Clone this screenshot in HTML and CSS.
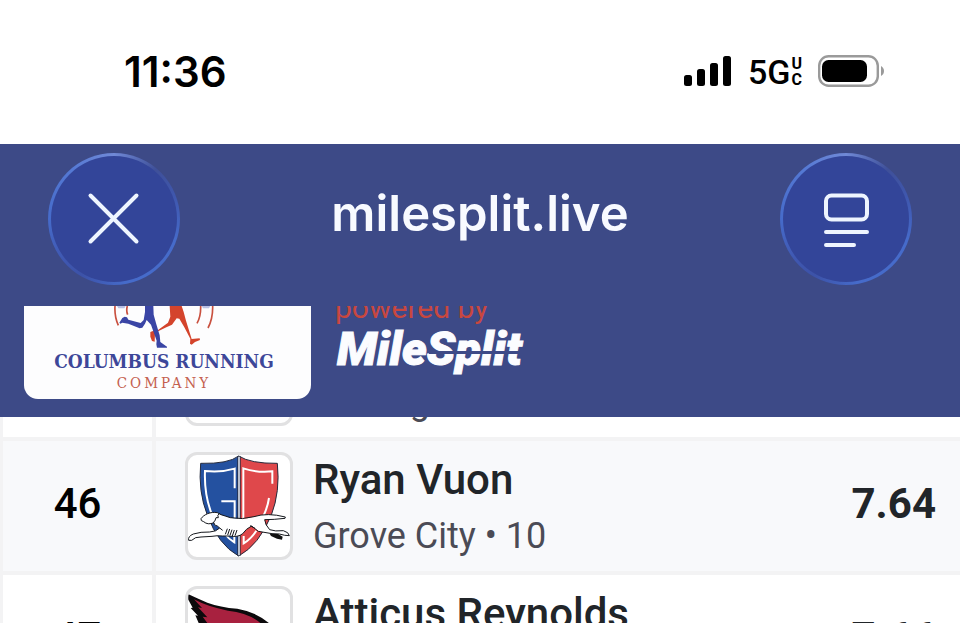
FILE: index.html
```html
<!DOCTYPE html>
<html lang="en">
<head>
<meta charset="utf-8">
<meta name="viewport" content="width=device-width, initial-scale=1">
<title>milesplit.live</title>
<link rel="stylesheet" href="styles.css">
</head>
<body>
<div class="status">
  <time class="clock">11:36</time>
  <div class="indicators">
    <svg class="signal" viewBox="0 0 48 30" aria-hidden="true">
      <rect x="0" y="19" width="8" height="11" rx="2.5"/>
      <rect x="13" y="13" width="8" height="17" rx="2.5"/>
      <rect x="26" y="7" width="8" height="23" rx="2.5"/>
      <rect x="39" y="0" width="8" height="30" rx="2.5"/>
    </svg>
    <div class="network"><span>5G</span><span class="network-sub"><span>U</span><span>C</span></span></div>
    <svg class="battery" viewBox="0 0 66 32" aria-hidden="true">
      <rect x="1.2" y="1.2" width="58.6" height="29.6" rx="9.5" fill="#fff" stroke="#9a9a9a" stroke-width="2.4"/>
      <rect x="4" y="5" width="45" height="22" rx="6.5"/>
      <path d="M63 11c4 2 4 8 0 10z" fill="#9a9a9a"/>
    </svg>
  </div>
</div>

<header class="header">
  <nav class="nav">
    <button class="round" type="button" aria-label="Close">
      <svg viewBox="0 0 132 132"><path d="M42.500 42.500l46 46M88.500 42.500l-46 46"/></svg>
    </button>
    <h1 class="title">milesplit.live</h1>
    <button class="round" type="button" aria-label="Page menu">
      <svg viewBox="0 0 132 132"><rect x="46" y="42.500" width="41" height="24" rx="5.500"/><path d="M46 79h41M46 92h28"/></svg>
    </button>
  </nav>
  <div class="sponsors">
    <div class="sponsor-card">
      <svg class="runners" viewBox="339 48 312 126" aria-hidden="true">
        <g fill="none" stroke="#c9503f" stroke-width="5">
          <path d="M348 48q-2 32 10 58M385 48q-4 14 1 26M605 48q1 32-11 52M641 48q1 38-14 66"/>
        </g>
        <path fill="#b9c0e4" d="M354 48h26l-4 7h-18zM608 48h26l-4 7h-18z"/>
        <path fill="#d4442c" d="M512 48H548L554 66L561 92L578 147L602 145L603 150L588 156L578 164L573 161L574 146L556 112L541 86L533 85L519 104L502 112L468 128L467 155L459 153L454 140V126L464 122L472 124L507 98L514 80z"/>
        <path fill="#3a45a5" d="M438 48H463L464 74L472 103L482 136L484 156L504 170V173H474L472 163L473 152L456 104L443 90L438 101L430 113L422 115L388 101L370 98L364 101L361 98L370 84L377 80L384 82L388 89L425 99L434 90L438 66z"/>
      </svg>
      <span class="sponsor-name">COLUMBUS RUNNING</span>
      <span class="sponsor-sub">COMPANY</span>
    </div>
    <div class="powered">
      <span class="powered-by">powered by</span>
      <a class="brand" href="#">MileSplit</a>
    </div>
  </div>
</header>

<main class="results">
  <table class="table">
    <tbody>
      <tr>
        <td class="rank"></td>
        <td class="athlete"><div class="entry"><span class="crest"></span><div><p class="name">&nbsp;</p><p class="school">Wellington</p></div></div></td>
        <td class="mark"></td>
      </tr>
      <tr class="alt">
        <td class="rank">46</td>
        <td class="athlete"><div class="entry">
          <span class="crest"><svg viewBox="54 45 306 306" aria-hidden="true">
            <path d="M206 48Q175 72 92 70Q84 155 112 225Q145 315 206 348z" fill="#2451a0" stroke="#252b3d" stroke-width="3"/>
            <path d="M206 48Q242 71 322 70Q331 155 304 225Q267 315 206 348z" fill="#df484b" stroke="#252b3d" stroke-width="3"/>
            <path d="M207 49v298" stroke="#252b3d" stroke-width="10"/>
            <path d="M207 50v296" stroke="#d5dce9" stroke-width="5"/>
            <g fill="none" stroke="#fff" stroke-width="6">
              <path d="M194 145V86Q154 98 105 93Q102 164 126 224M154 184h40v51M162 279q15 19 31 28v-19"/>
              <path d="M220 238V85q43 14 87 9v37M297 174q-4 27-16 52M259 272q-16 25-38 38v-22"/>
            </g>
            <path d="M93 236C101 224 122 214 142 218L153 224Q166 228 181 233Q218 240 252 230Q292 217 346 231L345 235Q311 239 284 239Q285 254 299 269Q315 275 340 272Q357 277 358 287Q344 287 328 282L306 281L265 274L245 258Q228 266 218 281Q204 293 177 288L157 288Q141 286 126 289L93 291Q75 290 65 301L56 301Q53 289 70 282Q92 275 119 276Q139 275 149 264L142 258Q130 256 132 248Q113 256 101 245Q91 243 93 236z" fill="#fff" stroke="#15181d" stroke-width="3" stroke-linejoin="round"/>
            <path d="M149 220q-9 5-4 13h-7q-2 12-9 15M240 257l15 8M149 264l9 7M172 266l-6 17M179 267l-6 18M186 269l-6 17M193 270l-6 18M201 270l-6 17" fill="none" stroke="#15181d" stroke-width="3"/>
            <path d="M299 281l25 1 14 8-2 9-15-3-18-8z" fill="#111"/>
          </svg></span>
          <div><p class="name">Ryan Vuon</p><p class="school">Grove City • 10</p></div>
        </div></td>
        <td class="mark">7.64</td>
      </tr>
      <tr>
        <td class="rank">47</td>
        <td class="athlete"><div class="entry">
          <span class="crest"><svg viewBox="54 447 306 306" aria-hidden="true">
            <path d="M54 462Q88 478 112 488Q150 502 202 506Q260 516 300 552L340 600H130L86 549L76 526L84 527L62 504L68 503L55 479z" fill="#0c0a0c"/>
            <path d="M72 478Q112 500 174 512Q240 520 272 550L300 600H150L112 549L98 530L112 532L84 502L96 504z" fill="#a8213f"/>
          </svg></span>
          <div><p class="name">Atticus Reynolds</p><p class="school">&nbsp;</p></div>
        </div></td>
        <td class="mark">7.66</td>
      </tr>
    </tbody>
  </table>
</main>
</body>
</html>
```
FILE: styles.css
```css
* {
  box-sizing: border-box;
}

body {
  margin: 0;
  height: 100vh;
  display: flex;
  flex-direction: column;
  overflow: hidden;
  background: #fff;
  color: #212529;
  font-family: Roboto, "Liberation Sans", sans-serif;
}

p,
h1 {
  margin: 0;
}

svg {
  display: block;
}

.status {
  flex: none;
  height: 144px;
  padding: 0 76px 2px 124px;
  display: flex;
  align-items: center;
  justify-content: space-between;
  color: #000;
}

.clock {
  padding-top: 2px;
  font: 600 42px/48px Inter, sans-serif;
}

.indicators {
  display: flex;
  align-items: center;
  gap: 16px;
}

.signal {
  width: 48px;
  height: 30px;
}

.network {
  padding-top: 2px;
  display: flex;
  align-items: center;
  gap: 1px;
  font-size: 34px;
  font-weight: 500;
  line-height: 34px;
}

.network-sub {
  display: flex;
  flex-direction: column;
  font-size: 16px;
  font-weight: 700;
  line-height: 16px;
}

.battery {
  width: 66px;
  height: 32px;
}

.header {
  flex: none;
  background: #3d4a87;
}

.nav {
  height: 162px;
  padding: 9px 48px 21px;
  display: flex;
  align-items: center;
  justify-content: space-between;
}

.title {
  padding-bottom: 10px;
  color: #f8faff;
  font: 600 49px/60px Inter, sans-serif;
}

.round {
  width: 132px;
  height: 132px;
  padding: 0;
  border: 3px solid transparent;
  border-radius: 50%;
  background:
    linear-gradient(#334599, #334599) padding-box,
    conic-gradient(#7089d6, #3f5099 40deg, #3f57ae 70deg, #466bca 110deg, #466bca 170deg, #3c52a8 210deg, #3f57b0 230deg, #466bca 270deg, #5579d4 320deg, #7089d6) border-box;
}

.round svg {
  width: 132px;
  height: 132px;
  margin: -3px;
  fill: none;
  stroke: #eef5ff;
  stroke-width: 4;
  stroke-linecap: round;
}

.sponsors {
  height: 111px;
  padding: 0 24px 18px;
  display: flex;
  gap: 24px;
  overflow: hidden;
}

.sponsor-card {
  width: 287px;
  padding-right: 7px;
  display: flex;
  flex-direction: column;
  align-items: center;
  border-radius: 0 0 14px 14px;
  background: #fdfdfe;
  font-family: "DejaVu Serif Condensed", "DejaVu Serif", serif;
  white-space: nowrap;
}

.runners {
  width: 104px;
  height: 42px;
}

.sponsor-name {
  color: #3d4799;
  font-size: 19px;
  font-weight: 700;
  line-height: 27px;
}

.sponsor-sub {
  color: #c4604f;
  font-size: 15px;
  letter-spacing: 3px;
  line-height: 16px;
}

.powered {
  margin-top: -14px;
  display: flex;
  flex-direction: column;
  align-items: flex-start;
}

.powered-by {
  color: #c8473f;
  font-size: 30px;
  line-height: 32px;
}

.brand {
  position: relative;
  margin-left: 2px;
  color: #fbfcff;
  font: italic 900 47px/50px Roboto, "Liberation Sans", sans-serif;
  text-decoration: none;
  -webkit-text-stroke: 1px #fbfcff;
}

.brand::after {
  content: "";
  position: absolute;
  top: 27px;
  right: 0;
  width: 50%;
  height: 3px;
  background: #3d4a87;
}

.results {
  flex: 1;
  min-height: 0;
  overflow: hidden;
}

.table {
  width: 100%;
  margin-top: -114px;
  border-spacing: 0;
}

.table td {
  height: 134px;
  padding: 0;
  border-top: 4px solid #f3f3f4;
}

.alt {
  background: #f8f9fb;
}

.table .rank {
  width: 152px;
  padding-bottom: 6px;
  border-left: 3px solid #f3f3f4;
  color: #000;
  font-size: 42px;
  font-weight: 500;
  text-align: center;
}

.table .athlete {
  padding-left: 29px;
  border-left: 4px solid #f3f3f4;
}

.entry {
  display: flex;
  align-items: center;
  gap: 20px;
}

.crest {
  width: 108px;
  height: 108px;
  overflow: hidden;
  border: 3px solid #e1e1e2;
  border-radius: 12px;
  background: #fff;
}

.name {
  font-size: 42px;
  font-weight: 500;
  line-height: 60px;
}

.school {
  color: #4b4b55;
  font-size: 36px;
  line-height: 52px;
}

.table .mark {
  padding-right: 24px;
  padding-bottom: 6px;
  font-size: 42px;
  font-weight: 700;
  text-align: right;
}
```
